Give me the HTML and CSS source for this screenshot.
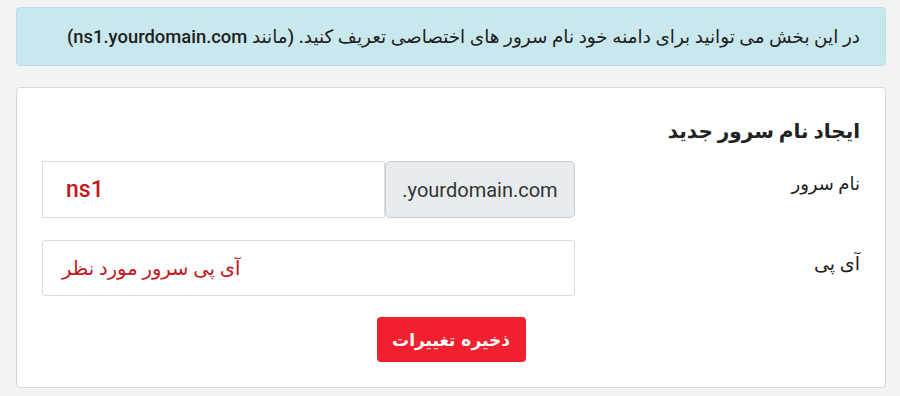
FILE: index.html
```html
<!DOCTYPE html>
<html lang="fa" dir="rtl">
<head>
<meta charset="utf-8">
<title>نام سرور</title>
<link rel="stylesheet" href="styles.css">
</head>
<body>
<div class="page">
  <div class="alert">در این بخش می توانید برای دامنه خود نام سرور های اختصاصی تعریف کنید. (مانند ns1.yourdomain.com)</div>
  <div class="card">
    <h2 class="card-title">ایجاد نام سرور جدید</h2>
    <div class="form-row">
      <label class="form-label">نام سرور</label>
      <div class="input-group" dir="ltr">
        <div class="field field-ns">ns1</div>
        <div class="addon">.yourdomain.com</div>
      </div>
    </div>
    <div class="form-row row-ip">
      <label class="form-label">آی پی</label>
      <div class="field field-ip" dir="ltr"><span dir="rtl">آی پی سرور مورد نظر</span></div>
    </div>
    <div class="actions">
      <button class="btn-save" type="button">ذخیره تغییرات</button>
    </div>
  </div>
</div>
</body>
</html>
```
FILE: styles.css
```css
* { box-sizing: border-box; }
html, body { margin: 0; padding: 0; }
body {
  background: #f3f3f3;
  font-family: Roboto, "DejaVu Sans", sans-serif;
  color: #222;
  width: 900px;
  height: 396px;
  overflow: hidden;
}
.page {
  padding: 7px 14px 0 16px;
  display: flex;
  flex-direction: column;
  gap: 21px;
}
.alert {
  height: 59px;
  background: #c9e8ee;
  border: 1px solid #b9e0e7;
  border-radius: 4px;
  padding: 0 25px;
  display: flex;
  align-items: center;
  font-size: 18.4px;
  font-weight: 500;
  color: #1e1e1e;
}
.card {
  height: 301px;
  background: #fff;
  border: 1px solid #d8d8d8;
  border-radius: 4px;
  padding: 28px 25px 25px;
}
.card-title {
  margin: 0 0 15px;
  font-size: 20px;
  line-height: 30px;
  font-weight: bold;
  color: #222;
}
.form-row {
  display: grid;
  grid-template-columns: 1fr 533px;
  align-items: start;
}
.row-ip { margin-top: 22px; }
.form-label {
  font-size: 18px;
  line-height: 24px;
  padding-top: 11px;
  color: #1e1e1e;
}
.row-ip .form-label { padding-top: 12px; font-size: 19px; }
.input-group {
  display: flex;
  height: 57px;
}
.field {
  flex: 1;
  height: 100%;
  border: 1px solid #dcdcdc;
  background: #fff;
  display: flex;
  align-items: center;
  color: #c4161c;
}
.field-ns {
  padding-left: 23px;
  font-size: 23px;
  font-weight: 500;
}
.addon {
  width: 190px;
  height: 100%;
  background: #e9ecef;
  border: 1px solid #c9cdd2;
  border-radius: 5px;
  display: flex;
  align-items: center;
  justify-content: center;
  font-size: 20px;
  color: #333;
}
.field-ip {
  height: 56px;
  padding-left: 19px;
  font-size: 19.5px;
  border-radius: 3px;
}
.actions {
  margin-top: 21px;
  display: flex;
  justify-content: center;
}
.btn-save {
  width: 149px;
  height: 45px;
  background: #f0202f;
  color: #fff;
  border: none;
  border-radius: 4px;
  font-family: "DejaVu Sans", sans-serif;
  font-size: 17px;
  font-weight: bold;
  padding: 0;
}
```
